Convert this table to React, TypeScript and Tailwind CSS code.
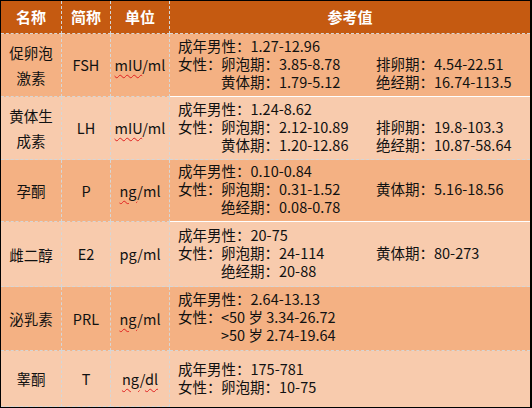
import React from 'react';

type Ref = {
  name: string[];
  abbr: string;
  unit: React.ReactNode;
  male: string;
  lines: [string, string?][];
  bg: string;
  edge: string;
  h: string;
};

const wavy = 'underline decoration-wavy decoration-[#e02020] decoration-1 underline-offset-[3px]';

const rows: Ref[] = [
  {
    name: ['促卵泡', '激素'],
    abbr: 'FSH',
    unit: (
      <>
        <span className={wavy}>mIU</span>/ml
      </>
    ),
    male: '成年男性：1.27-12.96',
    lines: [
      ['卵泡期：3.85-8.78', '排卵期：4.54-22.51'],
      ['黄体期：1.79-5.12', '绝经期：16.74-113.5'],
    ],
    bg: 'bg-[#f4b183]',
    edge: 'border-b border-solid border-b-white',
    h: 'h-[63px]',
  },
  {
    name: ['黄体生', '成素'],
    abbr: 'LH',
    unit: (
      <>
        <span className={wavy}>mIU</span>/ml
      </>
    ),
    male: '成年男性：1.24-8.62',
    lines: [
      ['卵泡期：2.12-10.89', '排卵期：19.8-103.3'],
      ['黄体期：1.20-12.86', '绝经期：10.87-58.64'],
    ],
    bg: 'bg-[#f8cbad]',
    edge: 'border-b border-dashed border-b-[#d6d6d6]',
    h: 'h-[63px]',
  },
  {
    name: ['孕酮'],
    abbr: 'P',
    unit: (
      <>
        <span className={wavy}>ng</span>/ml
      </>
    ),
    male: '成年男性：0.10-0.84',
    lines: [['卵泡期：0.31-1.52', '黄体期：5.16-18.56'], ['绝经期：0.08-0.78']],
    bg: 'bg-[#f4b183]',
    edge: 'border-b border-solid border-b-white',
    h: 'h-[62px]',
  },
  {
    name: ['雌二醇'],
    abbr: 'E2',
    unit: 'pg/ml',
    male: '成年男性：20-75',
    lines: [['卵泡期：24-114', '黄体期：80-273'], ['绝经期：20-88']],
    bg: 'bg-[#f8cbad]',
    edge: 'border-b border-dashed border-b-[#d6d6d6]',
    h: 'h-[65px]',
  },
  {
    name: ['泌乳素'],
    abbr: 'PRL',
    unit: (
      <>
        <span className={wavy}>ng</span>/ml
      </>
    ),
    male: '成年男性：2.64-13.13',
    lines: [['<50 岁 3.34-26.72'], ['>50 岁 2.74-19.64']],
    bg: 'bg-[#f4b183]',
    edge: 'border-b border-dashed border-b-[#d6d6d6]',
    h: 'h-[64px]',
  },
  {
    name: ['睾酮'],
    abbr: 'T',
    unit: (
      <>
        <span className={wavy}>ng</span>/<span className={wavy}>dl</span>
      </>
    ),
    male: '成年男性：175-781',
    lines: [['卵泡期：10-75']],
    bg: 'bg-[#f8cbad]',
    edge: '',
    h: 'h-[56px]',
  },
];

const cell = 'flex items-center justify-center border-r border-b border-dashed border-[#d6d6d6]';

export default function App() {
  return (
    <div
      className="w-[532px] h-[408px] border-t border-l border-r-2 border-b border-black bg-white text-[14.5px] leading-[18px] text-[#111]"
      style={{ fontFamily: '"Noto Sans CJK SC", "Noto Sans", sans-serif' }}
    >
      <div className="grid grid-cols-[61px_49px_59px_1fr] h-[33px] bg-[#c55a11] text-white font-bold text-[15px]">
        <div className={cell}>名称</div>
        <div className={cell}>简称</div>
        <div className={cell}>单位</div>
        <div className="flex items-center justify-center border-b border-dashed border-[#d6d6d6]">参考值</div>
      </div>
      {rows.map((r) => (
        <div key={r.abbr} className={`grid grid-cols-[61px_49px_59px_1fr] ${r.h} ${r.bg}`}>
          <div className={`${cell} flex-col`}>
            {r.name.map((n) => (
              <div key={n} className="leading-[25px]">{n}</div>
            ))}
          </div>
          <div className={cell}>{r.abbr}</div>
          <div className={cell}>
            <span>{r.unit}</span>
          </div>
          <div className={`flex flex-col justify-center pl-[8px] pb-[3px] ${r.edge}`}>
            <div>{r.male}</div>
            {r.lines.map((l, i) => (
              <div key={i} className="grid grid-cols-[43px_155px_1fr] whitespace-nowrap">
                <span>{i === 0 ? '女性：' : ''}</span>
                <span>{l[0]}</span>
                <span>{l[1] ?? ''}</span>
              </div>
            ))}
          </div>
        </div>
      ))}
    </div>
  );
}
